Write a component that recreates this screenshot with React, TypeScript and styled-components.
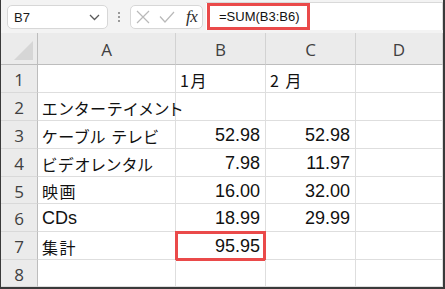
import React from 'react';
import styled, { createGlobalStyle } from 'styled-components';

const GlobalStyle = createGlobalStyle`
  html, body {
    margin: 0;
    padding: 0;
    background: #ffffff;
  }
  * {
    box-sizing: border-box;
  }
`;

const Frame = styled.div`
  width: 445px;
  height: 289px;
  border-left: 1px solid #3a3a3a;
  border-right: 2px solid #3a3a3a;
  border-bottom: 2px solid #3a3a3a;
  background: #ffffff;
  overflow: hidden;
  font-family: 'Liberation Sans', Arial, sans-serif;
`;

const Toolbar = styled.div`
  height: 33px;
  display: flex;
  align-items: flex-start;
  background: #f3f3f3;
  padding-top: 5px;
  padding-left: 6px;
`;

const Pill = styled.div<{ $width: number }>`
  width: ${p => p.$width}px;
  height: 24px;
  background: #ffffff;
  border: 1px solid #d7d7d7;
  border-radius: 5px;
  display: flex;
  align-items: center;
`;

const NameText = styled.span`
  flex: 1;
  padding-left: 6px;
  font-size: 13px;
  color: #1a1a1a;
`;

const Grip = styled.div`
  width: 22px;
  height: 24px;
  display: flex;
  flex-direction: column;
  align-items: center;
  justify-content: center;
  gap: 2px;

  span {
    width: 2px;
    height: 2px;
    background: #9a9a9a;
  }
`;

const IconSlot = styled.span<{ $ml: number; $mr?: number }>`
  margin-left: ${p => p.$ml}px;
  margin-right: ${p => p.$mr ?? 0}px;
  display: flex;
  align-items: center;
`;

const Fx = styled.span`
  margin-left: 11px;
  font-family: 'Liberation Serif', 'Times New Roman', serif;
  font-style: italic;
  font-size: 17px;
  color: #2b2b2b;
  letter-spacing: -0.5px;
`;

const FormulaBar = styled.div`
  flex: 1;
  margin-left: 3px;
  margin-top: -3px;
  height: 28px;
  background: #ffffff;
  border-top: 1px solid #d9d9d9;
  border-right: 1px solid #d9d9d9;
  display: flex;
  align-items: flex-start;
  padding-left: 1px;
`;

const FormulaText = styled.span`
  width: 103px;
  height: 27px;
  border: 3px solid #ea4a4a;
  padding-left: 9px;
  display: flex;
  align-items: center;
  font-size: 13px;
  color: #111111;
`;

const Grid = styled.div`
  display: grid;
  grid-template-columns: 37px 138px 90px 90px 1fr;
  grid-template-rows: 32px 28px 28px 28px 28px 27px 28px 28px 27px;
`;

const HeadCell = styled.div<{ $corner?: boolean }>`
  position: relative;
  background: #ebebeb;
  border-right: 1px solid ${p => (p.$corner ? '#bdbdbd' : '#d2d2d2')};
  border-bottom: 1px solid #bdbdbd;
  display: flex;
  align-items: center;
  justify-content: center;
  font-family: 'Open Sans', 'Liberation Sans', sans-serif;
  font-size: 17px;
  color: #404040;
  padding-top: 1px;
`;

const CornerMark = styled.div`
  position: absolute;
  right: 4px;
  bottom: 4px;
  width: 19px;
  height: 19px;
  background: #d6d6d6;
  clip-path: polygon(100% 0, 100% 100%, 0 100%);
`;

const RowHead = styled.div`
  background: #ebebeb;
  border-right: 1px solid #bdbdbd;
  border-bottom: 1px solid #d9d9d9;
  display: flex;
  align-items: center;
  justify-content: center;
  font-family: 'Open Sans', 'Liberation Sans', sans-serif;
  font-size: 17px;
  color: #404040;
  padding-top: 2px;
`;

const Cell = styled.div<{ $num?: boolean; $jp?: boolean; $marked?: boolean }>`
  position: relative;
  border-right: 1px solid #dedede;
  border-bottom: 1px solid #dedede;
  display: flex;
  align-items: center;
  justify-content: ${p => (p.$num ? 'flex-end' : 'flex-start')};
  padding: 2px ${p => (p.$num ? '5px' : '0')} 0 ${p => (p.$num ? '0' : '4px')};
  font-family: ${p =>
    p.$jp
      ? "'Noto Sans CJK JP', 'Liberation Sans', sans-serif"
      : "'Liberation Sans', Arial, sans-serif"};
  font-feature-settings: 'palt';
  font-size: ${p => (p.$jp ? '16px' : '18px')};
  letter-spacing: ${p => (p.$jp ? '1.5px' : '0')};
  color: #111111;
  white-space: nowrap;

  ${p =>
    p.$marked &&
    `
    &::after {
      content: '';
      position: absolute;
      left: -1px;
      top: -1px;
      right: -1px;
      bottom: -2px;
      border: 3px solid #ea4a4a;
    }
  `}
`;

const Chevron = () => (
  <svg width="11" height="7" viewBox="0 0 11 7">
    <path d="M1 1 L5.5 5.5 L10 1" fill="none" stroke="#5a5a5a" strokeWidth="1.3" />
  </svg>
);

const CancelIcon = () => (
  <svg width="14" height="14" viewBox="0 0 14 14">
    <path d="M1 1 L13 13 M13 1 L1 13" stroke="#b9b9b9" strokeWidth="1.2" />
  </svg>
);

const EnterIcon = () => (
  <svg width="16" height="12" viewBox="0 0 16 12">
    <path d="M1 5.5 L6 11 L15 1" fill="none" stroke="#b9b9b9" strokeWidth="1.2" />
  </svg>
);

type Row = { n: number; a?: string; b?: string; c?: string; jp?: boolean; mark?: boolean };

const rows: Row[] = [
  { n: 1 },
  { n: 2, a: 'エンターテイメント', jp: true },
  { n: 3, a: 'ケーブル テレビ', b: '52.98', c: '52.98', jp: true },
  { n: 4, a: 'ビデオレンタル', b: '7.98', c: '11.97', jp: true },
  { n: 5, a: '映画', b: '16.00', c: '32.00', jp: true },
  { n: 6, a: 'CDs', b: '18.99', c: '29.99' },
  { n: 7, a: '集計', b: '95.95', jp: true, mark: true },
  { n: 8 },
];

const App: React.FC = () => {
  return (
    <>
      <GlobalStyle />
      <Frame>
        <Toolbar>
          <Pill $width={101}>
            <NameText>B7</NameText>
            <IconSlot $ml={0} $mr={7}>
              <Chevron />
            </IconSlot>
          </Pill>
          <Grip>
            <span />
            <span />
            <span />
          </Grip>
          <Pill $width={73}>
            <IconSlot $ml={5}>
              <CancelIcon />
            </IconSlot>
            <IconSlot $ml={9}>
              <EnterIcon />
            </IconSlot>
            <Fx>fx</Fx>
          </Pill>
          <FormulaBar>
            <FormulaText>=SUM(B3:B6)</FormulaText>
          </FormulaBar>
        </Toolbar>

        <Grid>
          <HeadCell $corner>
            <CornerMark />
          </HeadCell>
          <HeadCell>A</HeadCell>
          <HeadCell>B</HeadCell>
          <HeadCell>C</HeadCell>
          <HeadCell>D</HeadCell>

          {rows.map(r => (
            <React.Fragment key={r.n}>
              <RowHead>{r.n}</RowHead>
              <Cell $jp={r.jp}>{r.a}</Cell>
              {r.n === 1 ? (
                <Cell $jp>1月</Cell>
              ) : (
                <Cell $num $marked={r.mark}>
                  {r.b}
                </Cell>
              )}
              {r.n === 1 ? <Cell $jp>2 月</Cell> : <Cell $num>{r.c}</Cell>}
              <Cell />
            </React.Fragment>
          ))}
        </Grid>
      </Frame>
    </>
  );
};

export default App;
